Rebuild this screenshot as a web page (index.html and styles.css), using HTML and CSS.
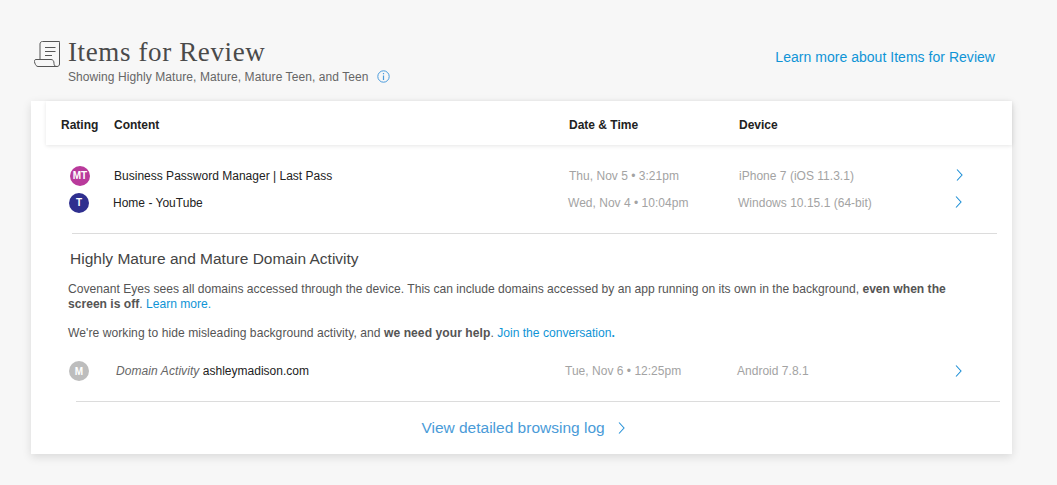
FILE: index.html
```html
<!DOCTYPE html>
<html lang="en">
<head>
<meta charset="utf-8">
<title>Items for Review</title>
<link rel="stylesheet" href="styles.css">
</head>
<body>
<header class="page-head">
  <svg class="scroll-icon" width="27" height="26" viewBox="0 0 27 26" fill="none" stroke="#555" stroke-width="1">
    <path d="M6 18.500V3C6 1.500 7 .5 8.500 .5H25.500C25.500 .5 25.500 1 25.500 2V23C25.500 24.500 24.500 25.500 23 25.500"/>
    <path d="M11 6.500H21.500M11 10.500H21.500M11 14.500H18"/>
    <path d="M23 25.500C21 25.500 20 24.500 20 22.500C20 20 19 18.500 17 18.500H2C.5 18.500 0 20 .8 22C1.500 24 2.500 25.500 4 25.500Z"/>
  </svg>
  <div class="head-text">
    <h1 class="title">Items for Review</h1>
    <p class="subtitle">Showing Highly Mature, Mature, Mature Teen, and Teen
      <svg class="info" width="13" height="13" viewBox="0 0 13 13" fill="none" stroke="#4a9bdc">
        <circle cx="6.500" cy="6.500" r="5.700"/>
        <path d="M6.500 5.500V10M6.500 3V4.200" stroke-width="1.200"/>
      </svg>
    </p>
  </div>
  <a class="learn-link" href="#">Learn more about Items for Review</a>
</header>

<main class="card">
  <div class="table-head">
    <span class="th th-rating">Rating</span>
    <span class="th th-content">Content</span>
    <span class="th th-date">Date &amp; Time</span>
    <span class="th">Device</span>
  </div>

  <div class="row row-first">
    <span class="badge badge-mt">MT</span>
    <span class="content">Business Password Manager | Last Pass</span>
    <span class="muted">Thu, Nov 5 • 3:21pm</span>
    <span class="muted">iPhone 7 (iOS 11.3.1)</span>
    <svg class="chevron" width="7" height="12" viewBox="0 0 7 12" fill="none" stroke="#1d8fd6" stroke-width="1.100"><path d="M1 .5L6 6L1 11.500"/></svg>
  </div>
  <div class="row row-second">
    <span class="badge badge-t">T</span>
    <span class="content">Home - YouTube</span>
    <span class="muted">Wed, Nov 4 • 10:04pm</span>
    <span class="muted">Windows 10.15.1 (64-bit)</span>
    <svg class="chevron" width="7" height="12" viewBox="0 0 7 12" fill="none" stroke="#1d8fd6" stroke-width="1.100"><path d="M1 .5L6 6L1 11.500"/></svg>
  </div>

  <hr class="rule rule-top">

  <section class="domain">
    <h2 class="domain-title">Highly Mature and Mature Domain Activity</h2>
    <p class="copy">Covenant Eyes sees all domains accessed through the device. This can include domains accessed by an app running on its own in the background, <b>even when the screen is off</b>. <a href="#">Learn more.</a></p>
    <p class="copy copy-second">We're working to hide misleading background activity, and <b>we need your help</b>. <a href="#">Join the conversation<b>.</b></a></p>
  </section>

  <div class="row row-domain">
    <span class="badge badge-m">M</span>
    <span class="content"><i class="kind">Domain Activity</i> ashleymadison.com</span>
    <span class="muted">Tue, Nov 6 • 12:25pm</span>
    <span class="muted">Android 7.8.1</span>
    <svg class="chevron" width="7" height="12" viewBox="0 0 7 12" fill="none" stroke="#1d8fd6" stroke-width="1.100"><path d="M1 .5L6 6L1 11.500"/></svg>
  </div>

  <hr class="rule rule-bottom">

  <a class="log-link" href="#">View detailed browsing log
    <svg width="7" height="12" viewBox="0 0 7 12" fill="none" stroke="#2a93d8" stroke-width="1.100"><path d="M1 .5L6 6L1 11.500"/></svg>
  </a>
</main>
</body>
</html>
```
FILE: styles.css
```css
* { box-sizing: border-box; }
html, body { height: 100%; }
body {
  margin: 0;
  padding: 39px 45px 0 31px;
  background: #f7f7f7;
  font-family: "Liberation Sans", Arial, sans-serif;
  color: #333;
  overflow: hidden;
}
.page-head {
  display: flex;
  align-items: flex-start;
  height: 62px;
  padding-left: 3px;
}
.scroll-icon { margin-top: 2px; margin-right: 7px; flex: none; }
.head-text { flex: 1; }
.title {
  margin: 0;
  font-family: "Liberation Serif", serif;
  font-weight: 400;
  font-size: 27px;
  line-height: 27px;
  letter-spacing: .62px;
  color: #4a4a4a;
}
.subtitle {
  margin: 3px 0 0;
  font-size: 12px;
  line-height: 16px;
  letter-spacing: .08px;
  color: #666;
}
.info { margin-left: 5px; vertical-align: -2px; }
.learn-link {
  margin: 10px 17px 0 0;
  font-size: 14px;
  line-height: 17px;
  letter-spacing: .03px;
  color: #0f94d6;
  text-decoration: none;
}
.card {
  height: 353px;
  background: #fff;
  box-shadow: 0 3px 9px rgba(0, 0, 0, .12);
}
.table-head {
  display: grid;
  grid-template-columns: 53px 455px 170px 1fr;
  align-items: center;
  height: 44px;
  margin-left: 15px;
  padding: 4px 0 0 15px;
  box-shadow: 0 1px 4px rgba(0, 0, 0, .1);
}
.th { font-size: 12px; font-weight: 700; color: #222; }
.row {
  display: grid;
  grid-template-columns: 44px 455px 170px 217px 7px;
  align-items: center;
  height: 27px;
  font-size: 12px;
}
.row-first { margin: 17px 0 0 39px; }
.row-second { margin-left: 38px; }
.row-domain { margin: 13px 0 0 38px; height: 34px; grid-template-columns: 47px 449px 172px 218px 7px; }
.chevron { margin-top: -1px; }
.row-domain .chevron { margin-top: 0; }
.badge {
  display: flex;
  align-items: center;
  justify-content: center;
  width: 20px;
  height: 20px;
  border-radius: 50%;
  color: #fff;
  font-size: 10px;
  font-weight: 700;
}
.badge-mt { background: #b93a9b; }
.badge-t { background: #2f2f8f; }
.badge-m { background: #bdbdbd; }
.content { color: #222; letter-spacing: .01px; }
.kind { color: #666; letter-spacing: .08px; }
.muted { color: #a3a3a3; letter-spacing: .02px; }
.rule {
  height: 1px;
  margin: 0;
  border: 0;
  background: #dcdcdc;
}
.rule-top { margin: 17px 15px 0 41px; }
.rule-bottom { margin: 13px 12px 0 45px; }
.domain { padding-left: 37px; padding-right: 60px; }
.domain-title {
  margin: 16px 0 0 2px;
  font-size: 15.5px;
  font-weight: 400;
  line-height: 18px;
  color: #444;
}
.copy {
  margin: 14px 0 0;
  font-size: 12.1px;
  line-height: 15px;
  color: #555;
}
.copy-second { margin-top: 14px; letter-spacing: .05px; }
.copy a { color: #0f94d6; text-decoration: none; }
.copy-second a { letter-spacing: 0; }
.log-link {
  display: flex;
  justify-content: center;
  align-items: center;
  gap: 13px;
  margin: 16px 0 0 0;
  padding-left: 3px;
  font-size: 15.5px;
  line-height: 20px;
  color: #4a9bd8;
  text-decoration: none;
}
```
